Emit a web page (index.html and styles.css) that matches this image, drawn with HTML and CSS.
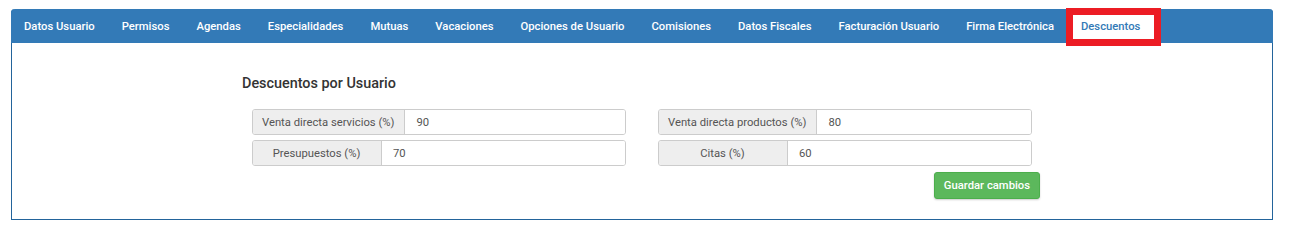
FILE: index.html
```html
<!DOCTYPE html>
<html>
<head>
  <title>Descuentos</title>
  <meta charset="utf-8">
  <link rel="stylesheet" href="styles.css">
</head>
<body>
  <div class="panel">
    <ul class="tabs">
      <li class="tab">Datos Usuario</li>
      <li class="tab">Permisos</li>
      <li class="tab">Agendas</li>
      <li class="tab">Especialidades</li>
      <li class="tab">Mutuas</li>
      <li class="tab">Vacaciones</li>
      <li class="tab">Opciones de Usuario</li>
      <li class="tab">Comisiones</li>
      <li class="tab">Datos Fiscales</li>
      <li class="tab">Facturación Usuario</li>
      <li class="tab">Firma Electrónica</li>
      <li class="tab active">Descuentos</li>
    </ul>
    <div class="content">
      <div class="container">
        <h4 class="heading">Descuentos por Usuario</h4>
        <div class="fields">
          <div class="input-group">
            <span class="addon">Venta directa servicios (%)</span>
            <input class="field" type="text" value="90">
          </div>
          <div class="input-group">
            <span class="addon">Venta directa productos (%)</span>
            <input class="field" type="text" value="80">
          </div>
          <div class="input-group">
            <span class="addon">Presupuestos (%)</span>
            <input class="field" type="text" value="70">
          </div>
          <div class="input-group">
            <span class="addon">Citas (%)</span>
            <input class="field" type="text" value="60">
          </div>
        </div>
        <div class="actions">
          <button class="btn-save" type="button">Guardar cambios</button>
        </div>
      </div>
    </div>
  </div>
</body>
</html>
```

FILE: styles.css
```css
body {
  margin: 0;
  font-family: Roboto, "Liberation Sans", sans-serif;
  color: #333;
  background: #fff;
}

.panel {
  margin: 9px 16px 0 11px;
  height: 210px;
  border: 1px solid #23649b;
  border-top: 0;
  border-radius: 4px 4px 0 0;
}

.tabs {
  list-style: none;
  margin: 0 -1px;
  padding: 0;
  height: 34px;
  display: flex;
  align-items: stretch;
  background-color: #337ab7;
  border-radius: 4px 4px 0 0;
}

.tab {
  display: flex;
  align-items: center;
  padding: 0 13.5px;
  font-size: 11.25px;
  font-weight: 500;
  color: #fff;
  white-space: nowrap;
}

.tab:first-child {
  padding-left: 13px;
}

.tab.active {
  position: relative;
  background-color: #fff;
  color: #337ab7;
}

/* recuadro rojo de marca */
.tab.active::after {
  content: "";
  position: absolute;
  top: -1px;
  bottom: -3px;
  left: -2px;
  right: -7px;
  border: 7px solid #ec1c24;
}

.content {
  padding-top: 31px;
}

.container {
  width: 780px;
  margin: 0 auto;
}

.heading {
  margin: 0 0 15px -10px;
  font-size: 14.4px;
  line-height: 20px;
  font-weight: 500;
  color: #333;
}

.fields {
  display: grid;
  grid-template-columns: 374px 374px;
  column-gap: 32px;
  row-gap: 5px;
}

.input-group {
  display: flex;
  height: 26px;
  box-sizing: border-box;
  border: 1px solid #ccc;
  border-radius: 3px;
  overflow: hidden;
}

.addon {
  display: flex;
  align-items: center;
  justify-content: center;
  min-width: 129px;
  box-sizing: border-box;
  padding: 0 10px 0 9px;
  background-color: #eee;
  border-right: 1px solid #ccc;
  font-size: 11.25px;
  color: #555;
  white-space: nowrap;
}

.field {
  flex: 1;
  min-width: 0;
  border: 0;
  padding: 0 11px;
  font-family: inherit;
  font-size: 11.25px;
  color: #555;
  outline: none;
}

.actions {
  display: flex;
  justify-content: flex-end;
  margin: 6px -8px 0 0;
}

.btn-save {
  height: 27px;
  padding: 0 9px;
  border: 1px solid #4cae4c;
  border-radius: 3px;
  background-color: #5cb85c;
  box-shadow: 0 1px 2px rgba(0, 0, 0, 0.2);
  font-family: inherit;
  font-size: 11.25px;
  font-weight: 500;
  color: #fff;
}
```
